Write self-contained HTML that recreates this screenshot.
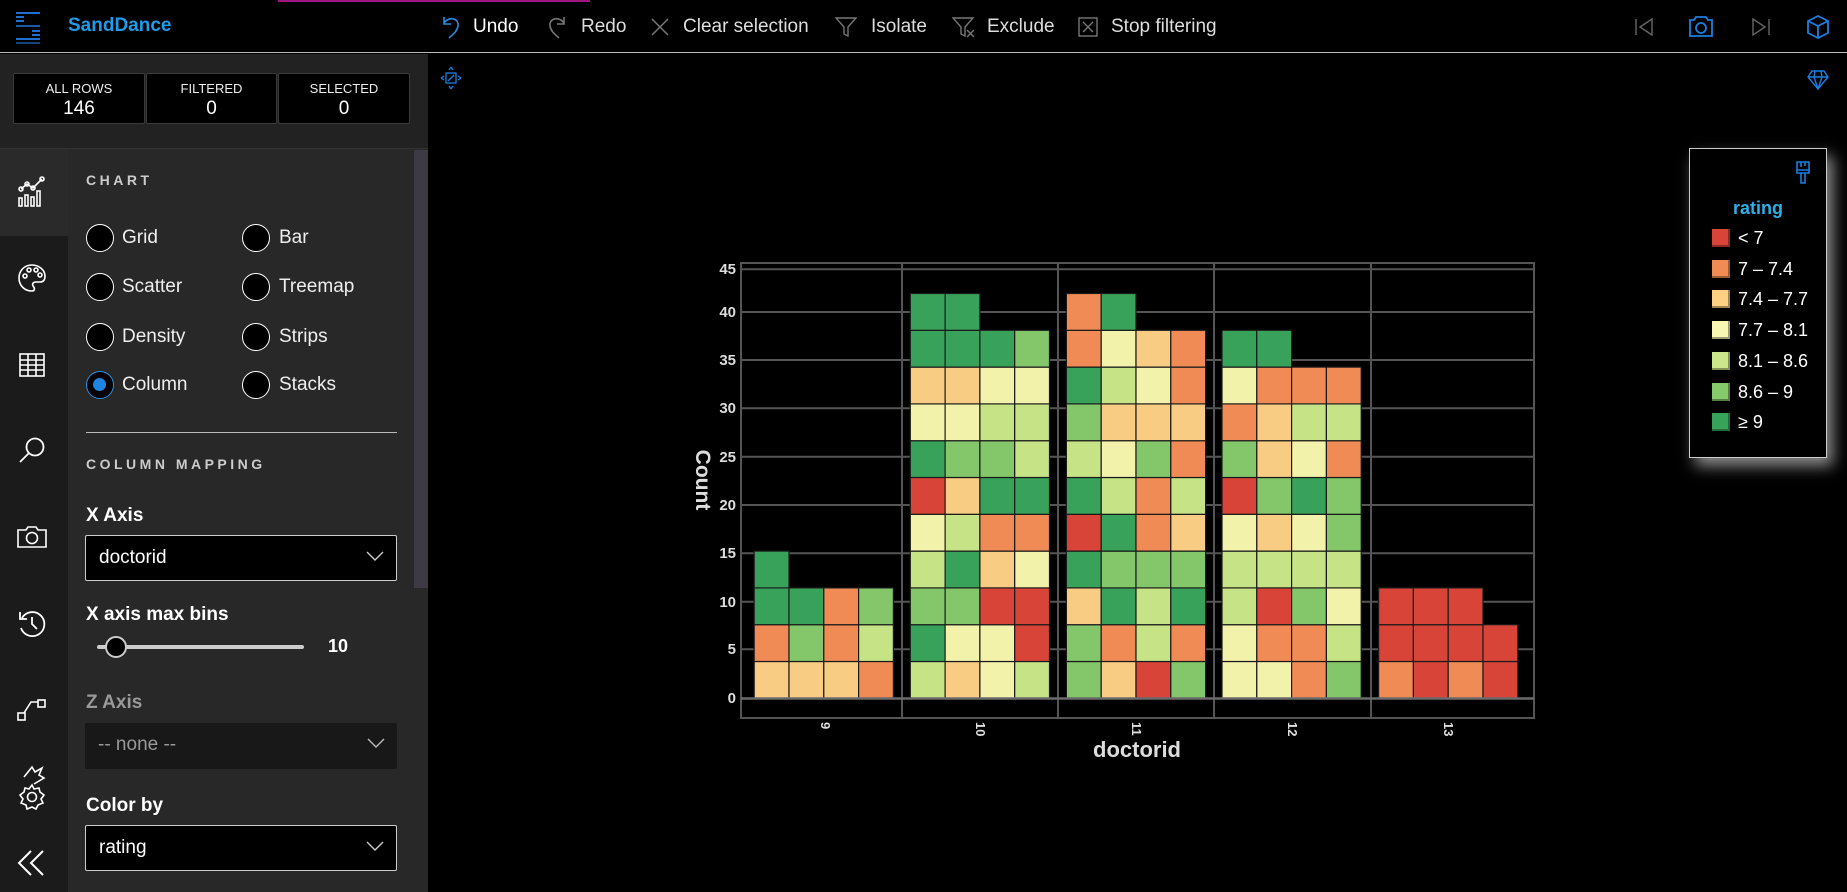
<!DOCTYPE html>
<html><head><meta charset="utf-8">
<style>
*{margin:0;padding:0;box-sizing:border-box}
body{width:1847px;height:892px;background:#000;overflow:hidden;position:relative;font-family:"Liberation Sans",sans-serif;color:#fff}
.a{position:absolute}
.tb{position:absolute;top:16px;font-size:19px;color:#ddd;white-space:nowrap}
.stat{position:absolute;top:73px;height:51px;background:#000;border:1px solid #3a3a3a;border-radius:2px;text-align:center}
.stat .l{font-size:13px;margin-top:7px;color:#eee}
.stat .v{font-size:19px;margin-top:2px}
.rad{position:absolute;width:28px;height:28px;border-radius:50%;border:1.5px solid #fff;background:#000}
.rl{position:absolute;font-size:19px;color:#eee}
.hd{position:absolute;font-size:14px;font-weight:bold;letter-spacing:3.5px;color:#ccc}
.lab{position:absolute;font-size:19px;font-weight:bold}
.dd{position:absolute;left:85px;width:312px;height:46px;background:#000;border:1px solid #ccc;border-radius:2px;font-size:19px;padding:11px 0 0 13px}
.chev{position:absolute;right:12px;top:14px}
</style></head><body>
<!-- header -->
<div class="a" style="left:0;top:0;width:1847px;height:53px;background:#000;border-bottom:1px solid #bbb"></div>
<div class="a" style="left:278px;top:0;width:312px;height:2px;background:#a0157f"></div>
<svg class="a" style="left:16px;top:12px" width="24" height="32" viewBox="0 0 24 32">
<g fill="#1f6fd1">
<rect x="0" y="0" width="24" height="2"/><rect x="0" y="4" width="8" height="2"/><rect x="0" y="8" width="8" height="2"/>
<rect x="0" y="13" width="24" height="2" opacity=".8"/><rect x="16" y="18" width="8" height="2"/><rect x="16" y="22" width="8" height="2"/>
<rect x="0" y="26" width="24" height="2"/><rect x="0" y="30" width="24" height="2" opacity=".6"/></g></svg>
<div class="a" style="left:68px;top:15px;font-size:19px;font-weight:bold;color:#1e9be9">SandDance</div>
<svg class="a" style="left:441px;top:14px" width="20" height="26" viewBox="0 0 20 26"><path d="M3 3 L3 10 L10 10 M3 9 C8 2 18 4 17 12 C16 18 11 21 8 24" fill="none" stroke="#2b8de0" stroke-width="1.6"/></svg>
<div class="tb" style="left:473px;color:#fff">Undo</div>
<svg class="a" style="left:547px;top:14px" width="20" height="26" viewBox="0 0 20 26"><path d="M17 3 L17 10 L10 10 M17 9 C12 2 2 4 3 12 C4 18 9 21 12 24" fill="none" stroke="#777" stroke-width="1.6"/></svg>
<div class="tb" style="left:581px">Redo</div>
<svg class="a" style="left:651px;top:18px" width="18" height="18"><path d="M1 1 L17 17 M17 1 L1 17" stroke="#777" stroke-width="1.5"/></svg>
<div class="tb" style="left:683px">Clear selection</div>
<svg class="a" style="left:835px;top:16px" width="22" height="22"><path d="M1 2 H21 L13 11 V20 L9 18 V11 Z" fill="none" stroke="#777" stroke-width="1.4"/></svg>
<div class="tb" style="left:871px">Isolate</div>
<svg class="a" style="left:952px;top:16px" width="24" height="22"><path d="M1 2 H21 L13 11 V20 L9 18 V11 Z" fill="none" stroke="#777" stroke-width="1.4"/><path d="M15 14 L22 21 M22 14 L15 21" stroke="#777" stroke-width="1.4"/></svg>
<div class="tb" style="left:987px">Exclude</div>
<svg class="a" style="left:1078px;top:17px" width="20" height="20"><rect x="1" y="1" width="18" height="18" fill="none" stroke="#777" stroke-width="1.4"/><path d="M5 5 L15 15 M15 5 L5 15" stroke="#777" stroke-width="1.4"/></svg>
<div class="tb" style="left:1111px">Stop filtering</div>
<svg class="a" style="left:1634px;top:17px" width="20" height="20"><path d="M2 2 V18 M18 2 L6 10 L18 18 Z" fill="none" stroke="#666" stroke-width="1.4"/></svg>
<svg class="a" style="left:1689px;top:16px" width="24" height="21"><path d="M1 4 H5 L7 1 H17 L19 4 H23 V20 H1 Z" fill="none" stroke="#1a7fe0" stroke-width="1.8"/><circle cx="12" cy="12" r="5" fill="none" stroke="#1a7fe0" stroke-width="1.8"/></svg>
<svg class="a" style="left:1751px;top:17px" width="20" height="20"><path d="M18 2 V18 M2 2 L14 10 L2 18 Z" fill="none" stroke="#666" stroke-width="1.4"/></svg>
<svg class="a" style="left:1807px;top:15px" width="22" height="24"><path d="M11 1 L21 6 V18 L11 23 L1 18 V6 Z M1 6 L11 11 L21 6 M11 11 V23" fill="none" stroke="#1a7fe0" stroke-width="1.8"/></svg>

<!-- left rail + panel -->
<div class="a" style="left:0;top:54px;width:428px;height:95px;background:#222"></div>
<div class="a" style="left:0;top:149px;width:68px;height:743px;background:#1b1b1b"></div>
<div class="a" style="left:0;top:149px;width:68px;height:87px;background:#2a2a2a"></div>
<div class="a" style="left:68px;top:149px;width:360px;height:743px;background:#282828"></div>
<div class="a" style="left:0;top:148px;width:428px;height:1px;background:#333"></div>
<div class="a" style="left:414px;top:150px;width:14px;height:438px;background:#3d3a46"></div>
<div class="stat" style="left:13px;width:132px"><div class="l">ALL ROWS</div><div class="v">146</div></div>
<div class="stat" style="left:146px;width:131px"><div class="l">FILTERED</div><div class="v">0</div></div>
<div class="stat" style="left:278px;width:132px"><div class="l">SELECTED</div><div class="v">0</div></div>

<!-- rail icons -->
<svg class="a" style="left:17px;top:176px" width="30" height="32"><g fill="none" stroke="#fff" stroke-width="1.6"><path d="M4 13 L10 8 L16 12 L25 3"/><circle cx="4" cy="13" r="2"/><circle cx="10" cy="8" r="2"/><circle cx="16" cy="12" r="2"/><circle cx="25" cy="3" r="2"/><rect x="2" y="22" width="3" height="8"/><rect x="8" y="19" width="3" height="11"/><rect x="14" y="21" width="3" height="9"/><rect x="20" y="15" width="3" height="15"/></g></svg>
<svg class="a" style="left:17px;top:263px" width="30" height="30"><g fill="none" stroke="#fff" stroke-width="1.6"><path d="M15 2 C7 2 2 8 2 15 C2 23 8 28 15 28 C18 28 18 25 16 23 C15 21 16 19 19 19 H23 C27 19 28 16 28 13 C28 7 22 2 15 2 Z"/><circle cx="8" cy="13" r="2"/><circle cx="12" cy="7" r="2"/><circle cx="19" cy="7" r="2"/><circle cx="23" cy="12" r="2"/></g></svg>
<svg class="a" style="left:19px;top:353px" width="26" height="24"><g fill="none" stroke="#fff" stroke-width="1.6"><rect x="1" y="1" width="24" height="22"/><path d="M1 7 H25 M1 12 H25 M1 17 H25 M9 1 V23 M17 1 V23"/></g></svg>
<svg class="a" style="left:18px;top:436px" width="28" height="28"><g fill="none" stroke="#fff" stroke-width="1.8"><circle cx="17" cy="11" r="8.5"/><path d="M11 17 L2 26"/></g></svg>
<svg class="a" style="left:17px;top:525px" width="30" height="24"><g fill="none" stroke="#fff" stroke-width="1.6"><path d="M1 5 H9 L11 2 H19 L21 5 H29 V22 H1 Z"/><circle cx="15" cy="13" r="5.5"/></g></svg>
<svg class="a" style="left:17px;top:609px" width="30" height="30"><g fill="none" stroke="#fff" stroke-width="1.8"><path d="M5 9 A12 12 0 1 1 4 19"/><path d="M3 3 V10 H10"/><path d="M15 8 V15 L20 20"/></g></svg>
<svg class="a" style="left:17px;top:698px" width="30" height="24"><g fill="none" stroke="#fff" stroke-width="1.6"><rect x="1" y="15" width="7" height="7"/><rect x="21" y="2" width="7" height="7"/><path d="M7 15 L14 4 H21"/></g></svg>
<svg class="a" style="left:16px;top:764px" width="32" height="48"><g fill="none" stroke="#fff" stroke-width="1.6"><path d="M8 13 L16 3 L19 8 L26 4 L23 11 L28 14 L18 20"/><circle cx="16" cy="33" r="4.5"/><path d="M16 21 L18 25 L23 24 L24 28 L28 31 L25 35 L27 39 L22 41 L20 45 L16 43 L11 45 L10 41 L5 39 L7 35 L4 31 L8 28 L9 24 L13 25 Z"/></g></svg>
<svg class="a" style="left:17px;top:850px" width="30" height="26"><g fill="none" stroke="#fff" stroke-width="2"><path d="M14 1 L2 13 L14 25 M26 1 L14 13 L26 25"/></g></svg>

<!-- panel content -->
<div class="hd" style="left:86px;top:172px">CHART</div>
<div class="rad" style="left:86px;top:224px"></div><div class="rl" style="left:122px;top:227px">Grid</div>
<div class="rad" style="left:242px;top:224px"></div><div class="rl" style="left:279px;top:227px">Bar</div>
<div class="rad" style="left:86px;top:273px"></div><div class="rl" style="left:122px;top:276px">Scatter</div>
<div class="rad" style="left:242px;top:273px"></div><div class="rl" style="left:279px;top:276px">Treemap</div>
<div class="rad" style="left:86px;top:323px"></div><div class="rl" style="left:122px;top:326px">Density</div>
<div class="rad" style="left:242px;top:323px"></div><div class="rl" style="left:279px;top:326px">Strips</div>
<div class="rad" style="left:86px;top:371px;border-color:#2a8fe0"><div style="position:absolute;left:6px;top:6px;width:13px;height:13px;border-radius:50%;background:#1e86e0"></div></div><div class="rl" style="left:122px;top:374px">Column</div>
<div class="rad" style="left:242px;top:371px"></div><div class="rl" style="left:279px;top:374px">Stacks</div>
<div class="a" style="left:86px;top:432px;width:311px;height:1px;background:#bbb"></div>
<div class="hd" style="left:86px;top:456px">COLUMN MAPPING</div>
<div class="lab" style="left:86px;top:505px">X Axis</div>
<div class="dd" style="top:535px">doctorid<svg class="chev" width="18" height="12"><path d="M1 2 L9 10 L17 2" fill="none" stroke="#ccc" stroke-width="1.4"/></svg></div>
<div class="lab" style="left:86px;top:604px">X axis max bins</div>
<div class="a" style="left:97px;top:645px;width:207px;height:4px;border-radius:2px;background:#ccc"></div>
<div class="a" style="left:105px;top:636px;width:22px;height:22px;border-radius:50%;background:#000;border:2px solid #ccc"></div>
<div class="a" style="left:328px;top:636px;font-size:18px;font-weight:bold">10</div>
<div class="lab" style="left:86px;top:692px;color:#999">Z Axis</div>
<div class="dd" style="top:723px;background:#181818;border:none;color:#999">-- none --<svg class="chev" width="18" height="12"><path d="M1 2 L9 10 L17 2" fill="none" stroke="#bbb" stroke-width="1.4"/></svg></div>
<div class="lab" style="left:86px;top:795px">Color by</div>
<div class="dd" style="top:825px">rating<svg class="chev" width="18" height="12"><path d="M1 2 L9 10 L17 2" fill="none" stroke="#ccc" stroke-width="1.4"/></svg></div>

<!-- canvas small icons -->
<svg class="a" style="left:440px;top:66px" width="22" height="24"><g fill="none" stroke="#1a7fe0" stroke-width="1.3"><rect x="6" y="7" width="10" height="10"/><path d="M8 15 L14 9 M11 1 L9 4 M11 1 L13 4 M11 23 L9 20 M11 23 L13 20 M1 12 L4 10 M1 12 L4 14 M21 12 L18 10 M21 12 L18 14"/></g></svg>
<svg class="a" style="left:1807px;top:70px" width="22" height="20"><g fill="none" stroke="#1a7fe0" stroke-width="1.4"><path d="M5 1 H17 L21 7 L11 19 L1 7 Z M1 7 H21 M8 1 L7 7 L11 19 L15 7 L14 1"/></g></svg>

<!-- chart -->
<svg class="a" style="left:0;top:0" width="1847" height="892">
<g stroke="#555" stroke-width="2" fill="none">
<rect x="741" y="263" width="793" height="455"/>
<line x1="741" x2="1534" y1="269.3" y2="269.3"/><line x1="741" x2="1534" y1="312" y2="312"/><line x1="741" x2="1534" y1="360" y2="360"/>
<line x1="741" x2="1534" y1="408.3" y2="408.3"/><line x1="741" x2="1534" y1="456.7" y2="456.7"/><line x1="741" x2="1534" y1="505" y2="505"/>
<line x1="741" x2="1534" y1="553.3" y2="553.3"/><line x1="741" x2="1534" y1="601.7" y2="601.7"/><line x1="741" x2="1534" y1="649.3" y2="649.3"/>
<line x1="902" x2="902" y1="263" y2="718"/><line x1="1058" x2="1058" y1="263" y2="718"/><line x1="1214" x2="1214" y1="263" y2="718"/><line x1="1371" x2="1371" y1="263" y2="718"/>
</g>
<g id="cells"></g>
<line x1="741" x2="1534" y1="698.5" y2="698.5" stroke="#6a6a6a" stroke-width="2.5"/>
<g fill="#ddd" font-size="15" font-weight="bold" text-anchor="end" font-family="Liberation Sans">
<text x="736" y="274">45</text><text x="736" y="317">40</text><text x="736" y="365">35</text><text x="736" y="413">30</text>
<text x="736" y="462">25</text><text x="736" y="510">20</text><text x="736" y="558">15</text><text x="736" y="607">10</text>
<text x="736" y="654">5</text><text x="736" y="703">0</text></g>
<text transform="translate(696,480) rotate(90)" text-anchor="middle" fill="#ddd" font-size="21" font-weight="bold" font-family="Liberation Sans">Count</text>
<g fill="#ddd" font-size="13" font-weight="bold" font-family="Liberation Sans">
<text transform="translate(821,722) rotate(90)">9</text><text transform="translate(976,722) rotate(90)">10</text>
<text transform="translate(1132,722) rotate(90)">11</text><text transform="translate(1288,722) rotate(90)">12</text>
<text transform="translate(1444,722) rotate(90)">13</text></g>
<text x="1137" y="757" text-anchor="middle" fill="#ddd" font-size="22" font-weight="bold" font-family="Liberation Sans">doctorid</text>
</svg>

<!-- legend -->
<div class="a" style="left:1689px;top:148px;width:138px;height:310px;border:1.5px solid #ccc;background:#000;box-shadow:6px 8px 14px rgba(255,255,255,.55)"></div>
<svg class="a" style="left:1795px;top:161px" width="16" height="24"><g fill="none" stroke="#1a7fe0" stroke-width="1.6"><path d="M2 1 H14 V12 H2 Z M6 1 V6 M10 1 V5 M2 9 H14 M6 12 V22 H10 V12"/></g></svg>
<div class="a" style="left:1689px;top:198px;width:138px;text-align:center;font-size:18px;font-weight:bold;color:#2bb0e8">rating</div>
<div class="a" style="left:1712px;top:223px;font-size:18px;line-height:30.7px">
<div><span style="display:inline-block;width:18px;height:18px;background:#d84437;vertical-align:-3px;margin-right:8px;border-right:2px solid #8a2a22;border-bottom:2px solid #8a2a22"></span>&lt; 7</div>
<div><span style="display:inline-block;width:18px;height:18px;background:#f08b55;vertical-align:-3px;margin-right:8px;border-right:2px solid #9a5a36;border-bottom:2px solid #9a5a36"></span>7 – 7.4</div>
<div><span style="display:inline-block;width:18px;height:18px;background:#fdd084;vertical-align:-3px;margin-right:8px;border-right:2px solid #a08450;border-bottom:2px solid #a08450"></span>7.4 – 7.7</div>
<div><span style="display:inline-block;width:18px;height:18px;background:#f7f6b2;vertical-align:-3px;margin-right:8px;border-right:2px solid #9c9b70;border-bottom:2px solid #9c9b70"></span>7.7 – 8.1</div>
<div><span style="display:inline-block;width:18px;height:18px;background:#cbe789;vertical-align:-3px;margin-right:8px;border-right:2px solid #809255;border-bottom:2px solid #809255"></span>8.1 – 8.6</div>
<div><span style="display:inline-block;width:18px;height:18px;background:#86ca6c;vertical-align:-3px;margin-right:8px;border-right:2px solid #557f44;border-bottom:2px solid #557f44"></span>8.6 – 9</div>
<div><span style="display:inline-block;width:18px;height:18px;background:#36a25a;vertical-align:-3px;margin-right:8px;border-right:2px solid #236a3a;border-bottom:2px solid #236a3a"></span>≥ 9</div>
</div>

<script>
var C={R:'#d84437',O:'#f08b55',Y:'#f8cc82',P:'#f3f2aa',L:'#c6e386',G:'#84c66a',D:'#38a25a'};
var cols=[
["YYYO","OGOL","DDOG","D"],
["LYPL","DPPR","GGRR","LDYP","PLOO","RYDD","DGGL","PPLL","YYPP","DDDG","DD"],
["GYRG","GOLO","YDLD","DGGG","RDOY","DLOL","LPGO","GYYY","DLPO","OPYO","OD"],
["PPOG","POOL","LRGP","LLLL","PYPG","RGDG","GYPO","OYLL","POOO","DD"],
["OROR","RRRR","RRR"]];
var xs=[754.2,910.3,1066.4,1222,1378.6],w=34.8,h=36.8,s='';
cols.forEach(function(rows,ci){rows.forEach(function(r,ri){for(var k=0;k<r.length;k++){
var x=xs[ci]+k*w,y=698.3-(ri+1)*h;
s+='<rect x="'+x.toFixed(1)+'" y="'+y.toFixed(1)+'" width="'+w+'" height="'+h+'" fill="'+C[r[k]]+'" stroke="#1a1a1a" stroke-width="1.2"/>';}});});
document.getElementById('cells').innerHTML=s;
</script>
</body></html>
